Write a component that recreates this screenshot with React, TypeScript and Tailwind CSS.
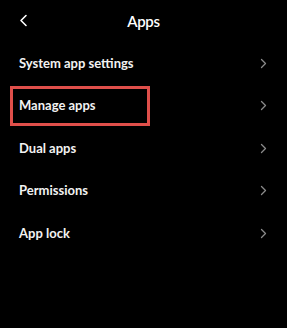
import React from "react";

const items = ["System app settings", "Manage apps", "Dual apps", "Permissions", "App lock"];

function Chevron() {
  return (
    <svg width="7" height="11" viewBox="0 0 7 11" fill="none" className="text-[#8a8a8a]">
      <path d="M1.5 1.5 L5.5 5.5 L1.5 9.5" stroke="currentColor" strokeWidth="1.3" strokeLinecap="round" strokeLinejoin="round" />
    </svg>
  );
}

export default function App() {
  return (
    <div className="w-[287px] h-[328px] bg-black text-white overflow-hidden" style={{ fontFamily: "Lato, 'Noto Sans', sans-serif" }}>
      {/* Header */}
      <div className="relative h-[42px] flex items-center justify-center">
        <svg width="9" height="13" viewBox="0 0 9 13" fill="none" className="absolute left-[19px] top-[14px]">
          <path d="M7 1.5 L2 6.5 L7 11.5" stroke="white" strokeWidth="1.6" strokeLinecap="round" strokeLinejoin="round" />
        </svg>
        <span className="text-[15px] font-semibold tracking-tight">Apps</span>
      </div>

      {/* List */}
      <div className="flex flex-col">
        {items.map((label, i) => (
          <div key={label} className="relative h-[42.5px] flex items-center justify-between pl-[19px] pr-[20px]">
            <span className="text-[13px] font-bold text-[#f2f2f2]">{label}</span>
            <Chevron />
            {i === 1 && (
              <div className="absolute left-[10px] top-[1px] w-[140px] h-[40px] border-[3px] border-[#df4f4a]" />
            )}
          </div>
        ))}
      </div>
    </div>
  );
}
